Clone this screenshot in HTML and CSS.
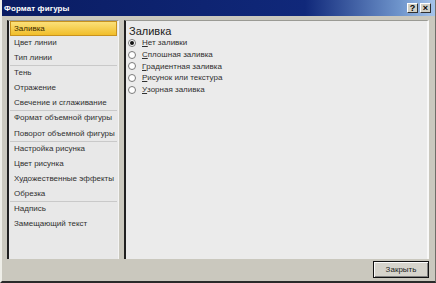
FILE: index.html
```html
<!doctype html>
<html lang="ru">
<head>
  <meta charset="UTF-8">
  <title>Формат фигуры</title>
  <link rel="stylesheet" href="styles.css">
</head>
<body>
  <div class="window">
    <div class="titlebar">
      <span class="title">Формат фигуры</span>
      <span class="tbtn">?</span>
      <span class="tbtn">&#215;</span>
    </div>

    <div class="content">
      <ul class="nav">
        <li class="sel">Заливка</li>
        <li>Цвет линии</li>
        <li class="last">Тип линии</li>
        <li>Тень</li>
        <li>Отражение</li>
        <li class="last">Свечение и сглаживание</li>
        <li>Формат объемной фигуры</li>
        <li class="last">Поворот объемной фигуры</li>
        <li>Настройка рисунка</li>
        <li>Цвет рисунка</li>
        <li>Художественные эффекты</li>
        <li class="last">Обрезка</li>
        <li>Надпись</li>
        <li>Замещающий текст</li>
      </ul>

      <div class="pane">
        <h2>Заливка</h2>
        <label class="opt"><span class="radio on"></span><u>Н</u>ет заливки</label>
        <label class="opt"><span class="radio"></span><u>С</u>плошная заливка</label>
        <label class="opt"><span class="radio"></span><u>Г</u>радиентная заливка</label>
        <label class="opt"><span class="radio"></span><u>Р</u>исунок или текстура</label>
        <label class="opt"><span class="radio"></span><u>У</u>зорная заливка</label>
      </div>
    </div>

    <div class="footer">
      <button class="btn">Закрыть</button>
    </div>
  </div>
</body>
</html>
```

FILE: styles.css
```css
* {box-sizing: border-box;}
body {margin: 0; font-family: "Liberation Sans", Arial, sans-serif;}

.window {
  width: 436px; height: 283px;
  background: #cac8be;
  border-left: 2px solid #eeeee8;
  border-bottom: 2px solid #2a2a2a;
  border-right: 1px solid #6f6e68;
  display: flex; flex-direction: column;
}

.titlebar {
  height: 16px;
  display: flex; align-items: center; gap: 2px;
  padding: 0 4px 0 2px;
  background: linear-gradient(to right, #0a1c62 0%, #10287a 70%, #6f95cc 92%, #a6c4ea 100%);
}
.title {flex: 1; color: #fff; font-weight: bold; font-size: 8px; letter-spacing: 0.1px;}
.tbtn {
  width: 11px; height: 10px;
  background: #d2d0c6;
  border: 1px solid #fff; border-right-color: #303030; border-bottom-color: #303030;
  font-size: 9px; font-weight: bold; line-height: 8px; text-align: center; color: #000;
}

.content {
  display: flex; gap: 5px;
  padding: 4px 6px 0 5px;
  height: 243px;
}

.nav {
  list-style: none; margin: 0; padding: 0 1px 0 1px;
  width: 112px;
  background: #e8e8e8;
  border-left: 2px solid #202020;
  border-top: 1px solid #9a9a94;
  border-right: 1px solid #f4f4f4;
  font-size: 8px; color: #303030;
}
.nav li {height: 15.1px; line-height: 14px; padding-left: 4px; white-space: nowrap;}
.nav li.last {border-bottom: 1px solid #c9c9c9;}
.nav li.sel {
  background: linear-gradient(#fbe07a, #f1be2a);
  border: 1px solid #c8921e;
  height: 15px; line-height: 13px; padding-left: 3px;
  color: #3a2a00;
}

.pane {
  flex: 1;
  background: #ebebeb;
  border-left: 2px solid #202020;
  border-top: 1px solid #9a9a94;
  border-right: 2px solid #f8f8f8;
  padding: 4px 0 0 3px;
  color: #303030;
}
.pane h2 {margin: 0; font-size: 11px; font-weight: normal; line-height: 12px; color: #222;}

.opt {display: flex; align-items: center; height: 11.7px; font-size: 8px;}
.opt u {text-decoration: underline;}
.radio {
  width: 8px; height: 8px; border-radius: 50%;
  background: #fff;
  border: 1px solid #7a7a7a;
  margin: 0 6px 0 -1px;
  display: flex; align-items: center; justify-content: center;
}
.radio.on::after {content: ""; width: 4px; height: 4px; border-radius: 50%; background: #111;}

.footer {
  flex: 1;
  display: flex; justify-content: flex-end; align-items: flex-start;
  padding: 2px 6px 0 0;
}
.btn {
  width: 56px; height: 17px;
  font-family: "Liberation Sans", Arial, sans-serif; font-size: 8px; color: #222;
  background: #d6d4cc;
  border: 1px solid #111;
  box-shadow: inset 1px 1px 0 #fafafa, inset -1px -1px 0 #808080;
  padding: 0;
}
```
